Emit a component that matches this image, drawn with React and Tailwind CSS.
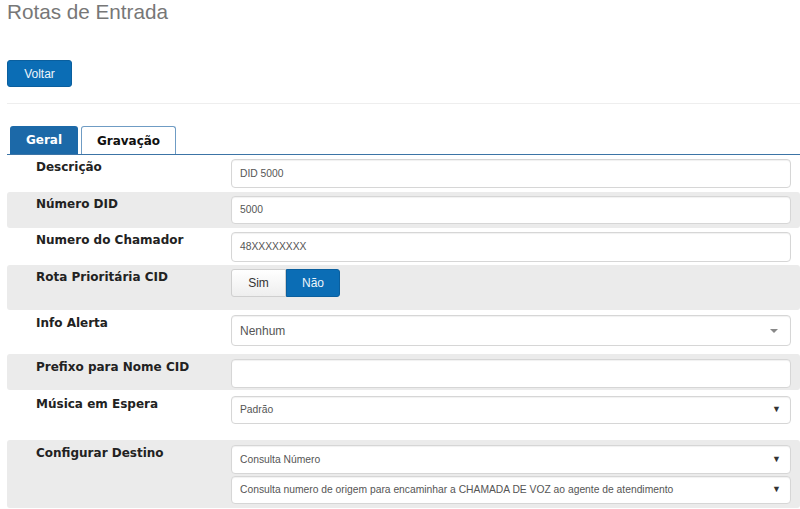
const LABEL = "font-['DejaVu_Sans',sans-serif] font-bold text-[12px] leading-[14px] text-[#222]";
const INPUT =
    "h-full w-full rounded-[4px] border border-[#d6d6d6] bg-white px-[8px] flex items-center font-['Liberation_Sans',Arial,sans-serif] text-[10.3px] text-[#555] shadow-[inset_0_1px_1px_rgba(0,0,0,0.06)]";

const Row = ({ label, gray, h, children }) => (
    <div
        className={`flex w-full rounded-[3px] pr-[9px] ${gray ? "bg-[#ebebeb]" : "bg-white"} ${h}`}
    >
        <div className={`w-[224px] shrink-0 pl-[29px] pt-[1px] ${LABEL}`}>{label}</div>
        <div className="flex-1 flex flex-col">{children}</div>
    </div>
);

const Select = ({ value, className }) => (
    <div className={`${INPUT} justify-between ${className}`}>
        <span>{value}</span>
        <span className="text-[9px] text-[#333] pr-[1px]">▼</span>
    </div>
);

const App = () => {
    return (
        <div className="w-[800px] h-[509px] overflow-hidden bg-white pl-[7px] font-['Liberation_Sans',Arial,sans-serif]">

            <h1 className="text-[20.7px] leading-[24px] text-[#777] font-normal">Rotas de Entrada</h1>

            <button className="mt-[36px] w-[65px] h-[27px] rounded-[3px] bg-[#0b6db5] border border-[#0a5f9e] text-[#eef5fb] text-[12px]">
                Voltar
            </button>

            <div className="mt-[16px] h-[1px] bg-[#eeeeee]" />

            {/* TABS */}

            <div className="mt-[22px] flex gap-[3px] pl-[3px] border-b border-[#3c74a6]">
                <div className="w-[68px] h-[28px] rounded-t-[3px] bg-[#1c69a8] flex items-center justify-center text-white font-['DejaVu_Sans',sans-serif] font-bold text-[12px]">
                    Geral
                </div>
                <div className="w-[95px] h-[28px] rounded-t-[3px] bg-white border border-b-0 border-[#6f9cc4] flex items-center justify-center text-[#111] font-['DejaVu_Sans',sans-serif] font-bold text-[12px]">
                    Gravação
                </div>
            </div>

            {/* FORM */}

            <Row label="Descrição" h="h-[37px] pt-[4px] pb-[4px]">
                <div className={INPUT}>DID 5000</div>
            </Row>

            <Row label="Número DID" gray h="h-[36px] pt-[4px] pb-[4px]">
                <div className={INPUT}>5000</div>
            </Row>

            <Row label="Numero do Chamador" h="h-[37px] pt-[4px] pb-[3px]">
                <div className={INPUT}>48XXXXXXXX</div>
            </Row>

            <Row label="Rota Prioritária CID" gray h="h-[45px] pt-[4px]">
                <div className="flex h-[28px] text-[12px]">
                    <div className="w-[55px] flex items-center justify-center rounded-l-[3px] border border-[#cfcfcf] bg-gradient-to-b from-white to-[#eeeeee] text-[#333]">
                        Sim
                    </div>
                    <div className="w-[54px] flex items-center justify-center rounded-r-[3px] bg-[#0b6db5] border border-[#0a5f9e] text-[#eef5fb]">
                        Não
                    </div>
                </div>
            </Row>

            <Row label="Info Alerta" h="h-[44px] pt-[5px] pb-[8px]">
                <div className={`${INPUT} justify-between text-[12px] pr-[12px]`}>
                    <span>Nenhum</span>
                    <span className="w-0 h-0 border-l-[4px] border-r-[4px] border-t-[4px] border-l-transparent border-r-transparent border-t-[#888]" />
                </div>
            </Row>

            <Row label="Prefixo para Nome CID" gray h="h-[36px] pt-[5px] pb-[2px]">
                <div className={INPUT} />
            </Row>

            <Row label="Música em Espera" h="h-[50px] pt-[6px] pb-[16px]">
                <Select value="Padrão" />
            </Row>

            <Row label="Configurar Destino" gray h="h-[68px] pt-[5px] pb-[4px]">
                <Select value="Consulta Número" className="h-[29px]" />
                <Select
                    value="Consulta numero de origem para encaminhar a CHAMADA DE VOZ ao agente de atendimento"
                    className="h-[28px] mt-[2px]"
                />
            </Row>

        </div>
    );
};

export default App;
